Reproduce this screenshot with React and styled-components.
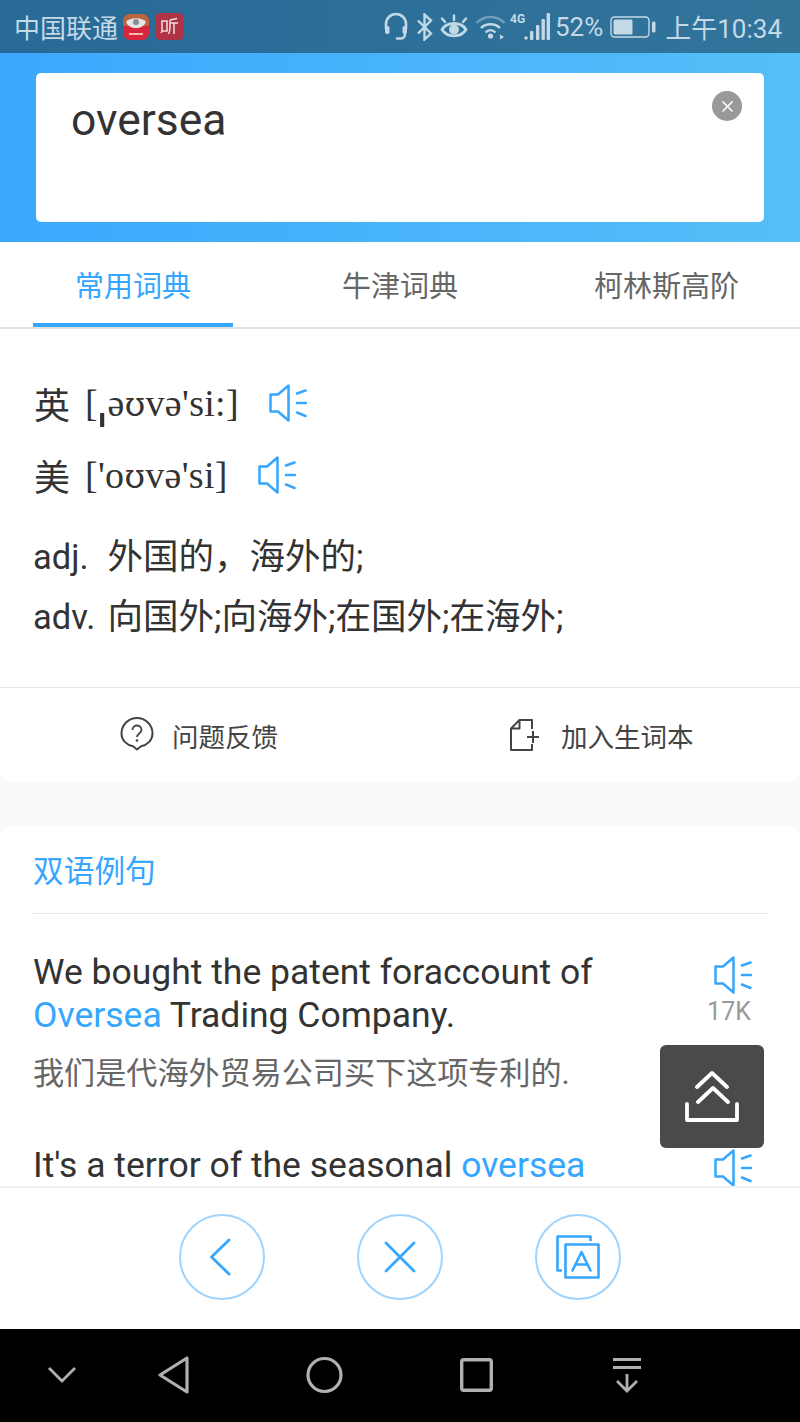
import React from "react";
import styled, { createGlobalStyle } from "styled-components";

const BLUE = "#36a6fe";
const CJK = `Roboto, "Noto Sans CJK SC", sans-serif`;

const GlobalStyle = createGlobalStyle`
  html, body {
    margin: 0;
    padding: 0;
    background: #fff;
  }
  * {
    box-sizing: border-box;
  }
`;

const Phone = styled.div`
  position: relative;
  width: 800px;
  height: 1422px;
  display: flex;
  flex-direction: column;
  overflow: hidden;
  font-family: ${CJK};
  color: #333;
  background: #f9f9f9;
`;

const StatusBar = styled.div`
  height: 53px;
  flex: none;
  display: flex;
  align-items: center;
  justify-content: space-between;
  padding: 0 18px 0 14px;
  color: #c3d9e6;
  font-size: 26px;
  background: linear-gradient(90deg, #276a97, #32749a);
`;

const StatusGroup = styled.div`
  display: flex;
  align-items: center;
  gap: ${({ $gap }) => $gap || 6}px;
`;

const Header = styled.div`
  height: 189px;
  flex: none;
  padding: 20px 36px;
  background: linear-gradient(90deg, #3ba8fe, #55bff8);
`;

const SearchBox = styled.div`
  height: 149px;
  display: flex;
  justify-content: space-between;
  padding: 21px 22px 0 35px;
  background: #fff;
  border-radius: 5px;
`;

const SearchText = styled.div`
  font-size: 44.4px;
  line-height: 52px;
  color: #333;
`;

const ClearButton = styled.div`
  width: 30px;
  height: 30px;
  margin-top: -3px;
  border-radius: 50%;
  background: #999;
  display: flex;
  align-items: center;
  justify-content: center;
`;

const Tabs = styled.div`
  height: 87px;
  flex: none;
  display: grid;
  grid-template-columns: 267px 267px 266px;
  background: #fff;
  border-bottom: 2px solid #e2e2e2;
`;

const Tab = styled.div`
  position: relative;
  display: flex;
  align-items: center;
  justify-content: center;
  padding: 0 1px 2px 0;
  font-size: 29px;
  color: ${({ $active }) => ($active ? BLUE : "#666")};
  ${({ $active }) =>
    $active &&
    `
    &::after {
      content: "";
      position: absolute;
      left: 33px;
      width: 200px;
      bottom: 0;
      height: 4px;
      background: ${BLUE};
    }
  `}
`;

const Scroll = styled.div`
  flex: 1;
  min-height: 0;
  overflow: hidden;
`;

const Card = styled.div`
  background: #fff;
  border-radius: 12px;
`;

const DictCard = styled(Card)`
  margin-bottom: 44px;
  border-radius: 0 0 12px 12px;
`;

const Phonetics = styled.div`
  padding: 38px 34px 0;
  height: 358px;
`;

const PhoneticRow = styled.div`
  height: 72px;
  display: flex;
  align-items: center;
  gap: 15px;
  font-size: 36px;
`;

const PhoneticText = styled.span`
  font-family: "Liberation Serif", "Noto Sans CJK SC", serif;
  font-size: 38px;
  letter-spacing: 0.3px;
  margin-right: 15px;
`;

const IpaGlyph = styled.span`
  font-family: "DejaVu Serif", serif;
  font-size: 33px;
`;

const StressMark = styled.span`
  font-family: "Noto Sans", sans-serif;
  font-size: 52px;
  line-height: 0;
  margin-right: 1px;
`;

const Region = styled.span`
  font-family: "Noto Sans CJK SC", sans-serif;
  font-size: 36px;
`;

const Meaning = styled.div`
  font-size: 35.5px;
  line-height: 60px;
  white-space: pre;
  color: #333;
`;

const Term = styled.span`
  display: inline-block;
  width: 74.5px;
  font-size: 34.5px;
`;

const Meanings = styled.div`
  margin: 16px 0 0 -1px;
`;

const ActionRow = styled.div`
  height: 95px;
  border-top: 1px solid #e6e6e6;
  display: flex;
  align-items: center;
`;

const Action = styled.div`
  display: flex;
  align-items: center;
  gap: ${({ $gap }) => $gap}px;
  margin-left: ${({ $left }) => $left}px;
  font-size: 26.5px;
  color: #444;
`;

const Section = styled(Card)`
  padding: 0 33px 60px;
`;

const SectionTitle = styled.div`
  height: 88px;
  display: flex;
  align-items: center;
  padding: 0 0 3px;
  font-size: 30.7px;
  color: ${BLUE};
  border-bottom: 1px solid #e6e6e6;
`;

const Example = styled.div`
  display: flex;
  justify-content: space-between;
  margin-top: ${({ $top }) => $top}px;
`;

const ExampleBody = styled.div`
  width: 640px;
`;

const English = styled.div`
  font-size: 35.5px;
  line-height: 43px;
  color: #333;
  span {
    color: ${BLUE};
  }
`;

const Chinese = styled.div`
  margin-top: 16px;
  font-size: 31.1px;
  line-height: 42px;
  color: #666;
`;

const Listen = styled.div`
  display: flex;
  flex-direction: column;
  align-items: center;
  width: 52px;
  margin-right: 8px;
  margin-top: 5px;
  font-size: 25px;
  color: #999;
`;

const Count = styled.div`
  margin: 4px 8px 0 0;
  line-height: 28px;
`;

const BackTop = styled.div`
  position: absolute;
  left: 660px;
  top: 1045px;
  width: 104px;
  height: 103px;
  border-radius: 6px;
  background: #4a4a4a;
  display: flex;
  align-items: center;
  justify-content: center;
`;

const BottomBar = styled.div`
  height: 143px;
  flex: none;
  background: #fff;
  border-top: 2px solid #efefef;
  padding-bottom: 3px;
  display: flex;
  align-items: center;
  justify-content: center;
  gap: 92px;
`;

const RoundButton = styled.div`
  width: 86px;
  height: 86px;
  border-radius: 50%;
  border: 2.5px solid #a0d4fd;
  display: flex;
  align-items: center;
  justify-content: center;
`;

const NavBar = styled.div`
  height: 93px;
  flex: none;
  background: #000;
  display: flex;
  align-items: center;
  padding: 0 0 2px 47px;
`;

const NavSlot = styled.div`
  width: ${({ $w }) => $w}px;
  flex: none;
  display: flex;
  align-items: center;
`;

const Speaker = ({ size = 38 }) => (
  <svg width={size} height={size} viewBox="0 0 38 38" fill="none" stroke={BLUE} strokeWidth="2.5">
    <path d="M1.500 10.500h7.500L19.500 1.500v35L9 27.500H1.500z" strokeLinejoin="round" />
    <path d="M28 9.500l8.500-3M28 19h9M28 28.500l8.500 3.500" strokeLinecap="round" />
  </svg>
);

const StatusIcons = () => (
  <>
    <svg width="24" height="30" viewBox="0 0 24 30" fill="none" stroke="#c3d9e6" strokeWidth="2.600" style={{ marginRight: 1 }}>
      <path d="M2 17v-5a10 10 0 0 1 20 0v5" />
      <rect x="1" y="14" width="4.500" height="8" rx="2" fill="#c3d9e6" stroke="none" />
      <rect x="18.500" y="14" width="4.500" height="8" rx="2" fill="#c3d9e6" stroke="none" />
      <path d="M21 22c0 3-2 4.500-4 4.500h-4" strokeLinecap="round" />
    </svg>
    <svg width="17" height="28" viewBox="0 0 17 28" fill="none" stroke="#c3d9e6" strokeWidth="2.400">
      <path d="M2 7.500l13 13-6.500 6V1.500l6.500 6-13 13" />
    </svg>
    <svg width="28" height="26" viewBox="0 0 28 26" fill="none" stroke="#c3d9e6" strokeWidth="2.800">
      <path d="M2 15.500C7 7.500 21 7.500 26 15.500 21 24 7 24 2 15.500z" />
      <circle cx="14" cy="15.500" r="5" fill="#c3d9e6" stroke="none" />
      <path d="M5 8L2 4.500M14 6V1.500M23 8l3-3.500" strokeLinecap="round" strokeWidth="2.400" />
    </svg>
    <svg width="31" height="26" viewBox="0 0 31 26" fill="none" stroke="#c3d9e6" strokeWidth="2.400">
      <path d="M1.500 9c8-8 20-8 28 0" opacity="0.45" />
      <path d="M6 14c5-5 14-5 19 0M10.500 18.500c3-3 7-3 10 0" />
      <circle cx="15.500" cy="22" r="2.600" fill="#c3d9e6" stroke="none" />
      <path d="M25 20.500l4 2.500-4 2.500z" fill="#c3d9e6" stroke="none" />
    </svg>
    <svg width="40" height="30" viewBox="0 0 40 30" fill="#c3d9e6" style={{ marginLeft: -3 }}>
      <text x="0" y="11" fontSize="12" fontWeight="700" fontFamily="Roboto, sans-serif">4G</text>
      <circle cx="16" cy="26" r="1.800" />
      <rect x="20" y="19" width="3.400" height="9" rx="1" />
      <rect x="26" y="13" width="3.400" height="15" rx="1" />
      <rect x="31.500" y="7" width="3.400" height="21" rx="1" />
      <rect x="36.600" y="1" width="3.400" height="27" rx="1" />
    </svg>
  </>
);

const Battery = () => (
  <svg width="46" height="24" viewBox="0 0 46 24" fill="none">
    <rect x="1" y="2" width="38" height="20" rx="3.500" stroke="#c3d9e6" strokeWidth="1.400" />
    <rect x="3.500" y="4.500" width="19" height="15" rx="1.500" fill="#c3d9e6" />
    <rect x="42" y="6.500" width="3.500" height="11" rx="1.500" fill="#c3d9e6" />
  </svg>
);

const App = () => (
  <Phone>
    <GlobalStyle />
    <StatusBar>
      <StatusGroup $gap={5}>
        <span>中国联通</span>
        <svg width="26" height="26" viewBox="0 0 26 26">
          <rect width="26" height="26" rx="7" fill="#d8263f" />
          <path d="M0 7a7 7 0 0 1 7-7h12a7 7 0 0 1 7 7v5H0z" fill="#b9653f" />
          <path d="M3 8c4-5 16-5 20 0-2 4-5 6-10 6S5 12 3 8z" fill="#e3e6e8" />
          <circle cx="13" cy="8" r="3" fill="#8a8d90" />
          <rect x="6" y="19" width="14" height="2" fill="#f3b7a8" />
        </svg>
        <svg width="27" height="27" viewBox="0 0 27 27" style={{ marginLeft: 2 }}>
          <rect width="27" height="27" rx="4" fill="#b03345" />
          <path d="M6 8h5v10H6zM6 18l-1 2M14 7v7c0 3-.500 5-1.500 7M14 10h8M18 10v11M14 7l7-1.500" fill="none" stroke="#eedfe0" strokeWidth="1.500" />
        </svg>
      </StatusGroup>
      <StatusGroup $gap={7}>
        <StatusIcons />
        <span style={{ marginLeft: -2 }}>52%</span>
        <Battery />
        <span style={{ marginLeft: 2 }}>上午10:34</span>
      </StatusGroup>
    </StatusBar>

    <Header>
      <SearchBox>
        <SearchText>oversea</SearchText>
        <ClearButton>
          <svg width="13" height="13" viewBox="0 0 13 13" stroke="#fff" strokeWidth="1.600">
            <path d="M1.500 1.500l10 10M11.500 1.500l-10 10" />
          </svg>
        </ClearButton>
      </SearchBox>
    </Header>

    <Tabs>
      <Tab $active>常用词典</Tab>
      <Tab>牛津词典</Tab>
      <Tab>柯林斯高阶</Tab>
    </Tabs>

    <Scroll>
      <DictCard>
        <Phonetics>
          <PhoneticRow>
            <Region>英</Region>
            <PhoneticText>
              [<StressMark>ˌ</StressMark>ə<IpaGlyph>ʊ</IpaGlyph>və'si:]
            </PhoneticText>
            <Speaker />
          </PhoneticRow>
          <PhoneticRow>
            <Region>美</Region>
            <PhoneticText>
              ['o<IpaGlyph>ʊ</IpaGlyph>və'si]
            </PhoneticText>
            <Speaker />
          </PhoneticRow>
          <Meanings>
            <Meaning><Term>adj.</Term>外国的，海外的;</Meaning>
            <Meaning><Term>adv.</Term>向国外;向海外;在国外;在海外;</Meaning>
          </Meanings>
        </Phonetics>
        <ActionRow>
          <Action $left={120} $gap={18}>
            <svg width="34" height="36" viewBox="0 0 34 36" fill="none" stroke="#444" strokeWidth="2">
              <path d="M17 32.500l-4-3.300C6.500 28 1.500 23 1.500 16.500a15.500 15.500 0 0 1 31 0c0 6.500-5 11.500-11.500 12.700z" strokeLinejoin="round" />
              <path d="M12.500 13c0-6 9-6 9 0 0 3.500-4.500 3.500-4.500 7" strokeWidth="1.800" />
              <circle cx="17" cy="23.500" r="1.300" fill="#444" stroke="none" />
            </svg>
            问题反馈
          </Action>
          <Action $left={232} $gap={21}>
            <svg width="30" height="32" viewBox="0 0 30 32" fill="none" stroke="#444" strokeWidth="2">
              <path d="M22 10V1H9.500L1 9.500V31h21v-6M9.500 1v8.500H1" strokeLinejoin="round" />
              <path d="M17 18h12M23 12v12" />
            </svg>
            加入生词本
          </Action>
        </ActionRow>
      </DictCard>

      <Section>
        <SectionTitle>双语例句</SectionTitle>
        <Example $top={37}>
          <ExampleBody>
            <English>
              We bought the patent foraccount of
              <br />
              <span>Oversea</span> Trading Company.
            </English>
            <Chinese>我们是代海外贸易公司买下这项专利的.</Chinese>
          </ExampleBody>
          <Listen>
            <Speaker />
            <Count>17K</Count>
          </Listen>
        </Example>
        <Example $top={49}>
          <ExampleBody>
            <English>
              It's a terror of the seasonal <span>oversea</span>
            </English>
          </ExampleBody>
          <Listen>
            <Speaker />
          </Listen>
        </Example>
      </Section>
    </Scroll>

    <BackTop>
      <svg width="54" height="51" viewBox="0 0 54 51" fill="none" stroke="#fff" strokeWidth="3.800" strokeLinecap="round" strokeLinejoin="round">
        <path d="M12 16L27 2l15 14M13 31l15-14 15 14" />
        <path d="M2 33v16h50V33" />
      </svg>
    </BackTop>

    <BottomBar>
      <RoundButton>
        <svg width="24" height="38" viewBox="0 0 24 38" fill="none" stroke={BLUE} strokeWidth="2.800" strokeLinecap="round" strokeLinejoin="round" style={{ marginLeft: -3 }}>
          <path d="M20 2L2.500 19 20 36" />
        </svg>
      </RoundButton>
      <RoundButton>
        <svg width="32" height="32" viewBox="0 0 32 32" fill="none" stroke={BLUE} strokeWidth="2.800" strokeLinecap="round">
          <path d="M2 2l28 28M30 2L2 30" />
        </svg>
      </RoundButton>
      <RoundButton>
        <svg width="44" height="44" viewBox="0 0 44 44" fill="none" stroke={BLUE} strokeWidth="2.600" strokeLinejoin="round">
          <path d="M34.500 6V1.500H1.500v34H6" />
          <rect x="9.500" y="9.500" width="33" height="33" />
          <path d="M16.500 35.500l9-18.500 9 18.500M19.500 29.500h12" strokeLinecap="round" />
        </svg>
      </RoundButton>
    </BottomBar>

    <NavBar>
      <NavSlot $w={111}>
        <svg width="30" height="18" viewBox="0 0 30 18" fill="none" stroke="#b0b0b0" strokeWidth="2.800">
          <path d="M2 2l13 13L28 2" />
        </svg>
      </NavSlot>
      <NavSlot $w={148}>
        <svg width="31" height="38" viewBox="0 0 31 38" fill="none" stroke="#b0b0b0" strokeWidth="3.200" strokeLinejoin="round">
          <path d="M29 2v34L2 19z" />
        </svg>
      </NavSlot>
      <NavSlot $w={154}>
        <svg width="37" height="38" viewBox="0 0 37 38" fill="none" stroke="#b0b0b0" strokeWidth="3.200">
          <circle cx="18.500" cy="19" r="16.500" />
        </svg>
      </NavSlot>
      <NavSlot $w={152}>
        <svg width="33" height="34" viewBox="0 0 33 34" fill="none" stroke="#b0b0b0" strokeWidth="3.400">
          <rect x="1.700" y="1.700" width="29.600" height="30.600" rx="2" />
        </svg>
      </NavSlot>
      <NavSlot $w={32}>
        <svg width="30" height="36" viewBox="0 0 30 36" fill="none" stroke="#b0b0b0" strokeWidth="3.200">
          <path d="M1 2.500h28M1 10.500h28" />
          <path d="M15 17v17M5 24l10 10 10-10" strokeWidth="2.800" />
        </svg>
      </NavSlot>
    </NavBar>
  </Phone>
);

export default App;
